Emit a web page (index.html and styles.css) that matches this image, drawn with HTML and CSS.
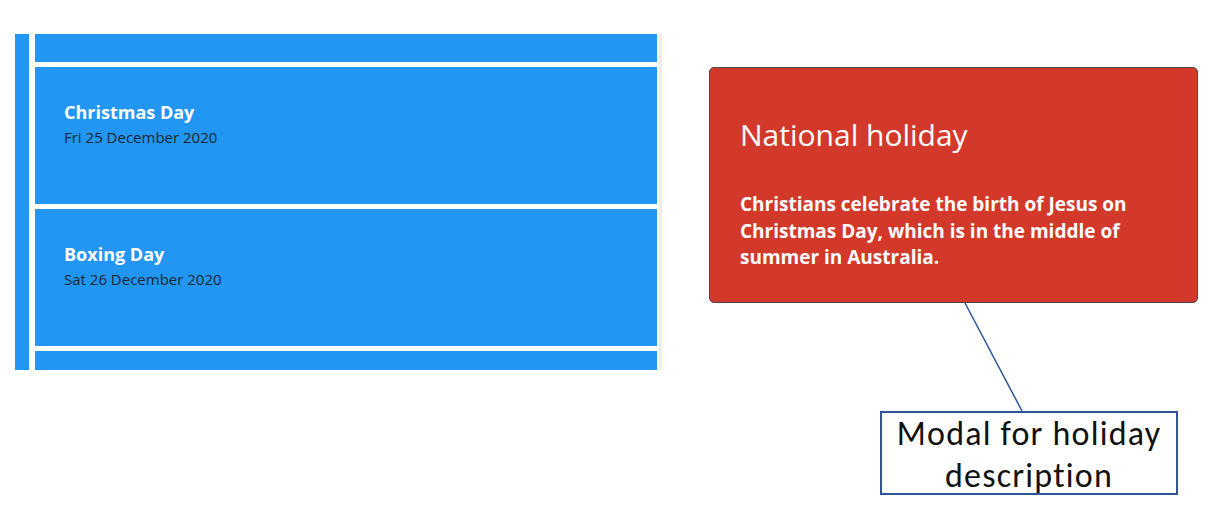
FILE: index.html
```html
<!DOCTYPE html>
<html lang="en">
<head>
<meta charset="utf-8">
<title>Holiday modal</title>
<link rel="stylesheet" href="styles.css">
</head>
<body>
<div class="page">
  <div class="app">
    <div class="rail"></div>
    <div class="viewport">
      <div class="list">
        <div class="card card-edge card-top"></div>
        <div class="card">
          <div class="card-title">Christmas Day</div>
          <div class="card-date">Fri 25 December 2020</div>
        </div>
        <div class="card">
          <div class="card-title">Boxing Day</div>
          <div class="card-date">Sat 26 December 2020</div>
        </div>
        <div class="card card-edge card-bottom"></div>
      </div>
    </div>
    <div class="scrollbar"></div>
  </div>
  <div class="annot">
    <div class="modal">
      <h2 class="modal-title">National holiday</h2>
      <p class="modal-text">Christians celebrate the birth of Jesus on Christmas Day, which is in the middle of summer in Australia.</p>
    </div>
    <div class="callout">Modal for holiday description</div>
  </div>
  <svg class="connector" width="1213" height="518" viewBox="0 0 1213 518">
    <line x1="965" y1="303" x2="1022" y2="411" stroke="#2f5597" stroke-width="1.5"/>
  </svg>
</div>
</body>
</html>
```

FILE: styles.css
```css
html, body {
  margin: 0;
  padding: 0;
  background: #ffffff;
}

.page {
  position: relative;
  display: flex;
  align-items: flex-start;
  padding: 34px 0 0 15px;
  width: 1213px;
  height: 518px;
  box-sizing: border-box;
  overflow: hidden;
  font-family: "Comic Sans MS", "Open Sans", sans-serif;
}

.app {
  display: flex;
  height: 336px;
  width: 647px;
  flex: none;
}

.rail {
  width: 14px;
  background: #2196f3;
}

.viewport {
  margin-left: 6px;
  width: 622px;
  overflow: hidden;
}

.list {
  display: flex;
  flex-direction: column;
  gap: 5px;
}

.card {
  height: 137px;
  flex: none;
  box-sizing: border-box;
  background: #2196f3;
  padding: 33px 29px 0;
}

.card-edge {
  padding: 0;
}

.card-top {
  height: 28px;
}

.card-bottom {
  height: 40px;
}

.card-title {
  color: #ffffff;
  font-weight: 700;
  font-size: 18px;
  line-height: 24px;
}

.card-date {
  margin-top: 3px;
  color: #1b2530;
  font-size: 15px;
  line-height: 20px;
}

.scrollbar {
  margin-left: 2px;
  width: 3px;
  background: #ececec;
}

.annot {
  display: flex;
  flex-direction: column;
  margin-left: 47px;
  padding-top: 33px;
  flex: none;
}

.modal {
  width: 489px;
  height: 236px;
  box-sizing: border-box;
  background: #d3392b;
  border: 1px solid #4a4a4a;
  border-radius: 5px;
  padding: 48px 30px 0;
  color: #ffffff;
}

.modal-title {
  margin: 0;
  font-weight: 400;
  font-size: 30px;
  line-height: 38px;
}

.modal-text {
  margin: 37px 0 0;
  width: 405px;
  font-weight: 700;
  font-size: 19px;
  line-height: 26.5px;
}

.callout {
  margin: 108px 0 0 171px;
  width: 298px;
  height: 84px;
  box-sizing: border-box;
  border: 2px solid #2f5597;
  font-family: "Carlito", "Open Sans", sans-serif;
  font-size: 34px;
  letter-spacing: 1.2px;
  line-height: 41.5px;
  text-align: center;
  color: #111111;
  padding-top: 0;
}

.connector {
  position: absolute;
  top: 0;
  left: 0;
  pointer-events: none;
}
```
